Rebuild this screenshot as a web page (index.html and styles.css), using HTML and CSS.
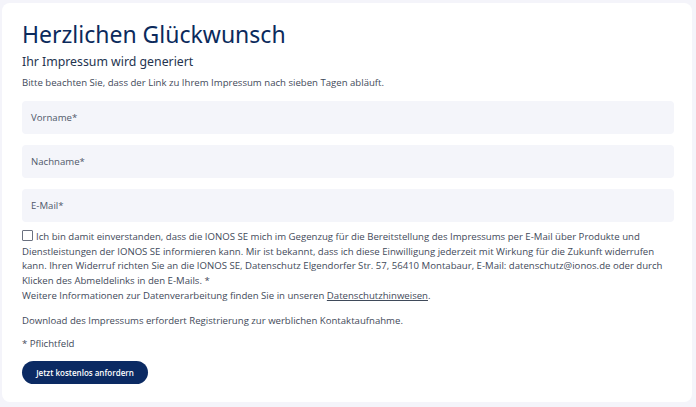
FILE: index.html
```html
<!DOCTYPE html>
<html lang="de">
<head>
<meta charset="utf-8">
<title>Impressum</title>
<link rel="stylesheet" href="styles.css">
</head>
<body>
<main class="card">
  <h1 class="title">Herzlichen Glückwunsch</h1>
  <h2 class="subtitle">Ihr Impressum wird generiert</h2>
  <p class="note">Bitte beachten Sie, dass der Link zu Ihrem Impressum nach sieben Tagen abläuft.</p>
  <form class="form">
    <div class="field">Vorname*</div>
    <div class="field">Nachname*</div>
    <div class="field field-last">E-Mail*</div>
    <p class="consent"><span class="checkbox"></span>Ich bin damit einverstanden, dass die IONOS SE mich im Gegenzug für die Bereitstellung des Impressums per E-Mail über Produkte und Dienstleistungen der IONOS SE informieren kann. Mir ist bekannt, dass ich diese Einwilligung jederzeit mit Wirkung für die Zukunft widerrufen kann. Ihren Widerruf richten Sie an die IONOS SE, Datenschutz Elgendorfer Str. 57, 56410 Montabaur, E-Mail: datenschutz@ionos.de oder durch Klicken des Abmeldelinks in den E-Mails. *<br>Weitere Informationen zur Datenverarbeitung finden Sie in unseren <a class="link" href="#">Datenschutzhinweisen</a>.</p>
    <p class="text">Download des Impressums erfordert Registrierung zur werblichen Kontaktaufnahme.</p>
    <p class="text text-required">* Pflichtfeld</p>
    <button type="button" class="button">Jetzt kostenlos anfordern</button>
  </form>
</main>
</body>
</html>
```
FILE: styles.css
```css
html, body {
  margin: 0;
  padding: 0;
}
body {
  background: #f4f4fa;
  font-family: "Open Sans", "Noto Sans", sans-serif;
  color: #3f4a5a;
  width: 696px;
  height: 407px;
  overflow: hidden;
}
.card {
  background: #fff;
  margin: 3px 4px 5px 2px;
  border-radius: 8px;
  padding: 16px 18px 18px 20px;
  height: 365px;
}
.title {
  margin: 0;
  font-family: "Noto Sans", "Open Sans", sans-serif;
  font-weight: 400;
  font-size: 23px;
  line-height: 30px;
  color: #0b2a5c;
}
.subtitle {
  margin: 4px 0 0;
  font-family: "Noto Sans", "Open Sans", sans-serif;
  font-weight: 400;
  font-size: 12.3px;
  line-height: 17px;
  color: #24344f;
}
.note {
  margin: 6px 0 0;
  font-size: 9.6px;
  line-height: 14px;
}
.form {
  margin-top: 11px;
  display: flex;
  flex-direction: column;
  align-items: flex-start;
}
.field {
  align-self: stretch;
  box-sizing: border-box;
  height: 33px;
  background: #f4f5fa;
  border-radius: 4px;
  padding: 0 9px;
  display: flex;
  align-items: center;
  font-size: 9.6px;
  color: #50596a;
  margin-bottom: 11px;
}
.field-last {
  margin-bottom: 8px;
}
.consent {
  margin: 0;
  font-size: 9.6px;
  line-height: 14.7px;
}
.checkbox {
  display: inline-block;
  width: 9px;
  height: 9px;
  border: 1px solid #6b7180;
  border-radius: 1px;
  vertical-align: -1px;
  margin-right: 3px;
  background: #fff;
}
.link {
  color: #3f4a5a;
  text-decoration: underline;
}
.text {
  margin: 9px 0 0;
  font-size: 9.6px;
  line-height: 15px;
}
.text-required {
  margin-top: 8px;
}
.button {
  margin-top: 10px;
  height: 23px;
  width: 126px;
  border: 0;
  border-radius: 12px;
  background: #0b2a63;
  color: #fff;
  font-family: "Open Sans", sans-serif;
  font-weight: 600;
  font-size: 8px;
  padding: 0;
}
```
